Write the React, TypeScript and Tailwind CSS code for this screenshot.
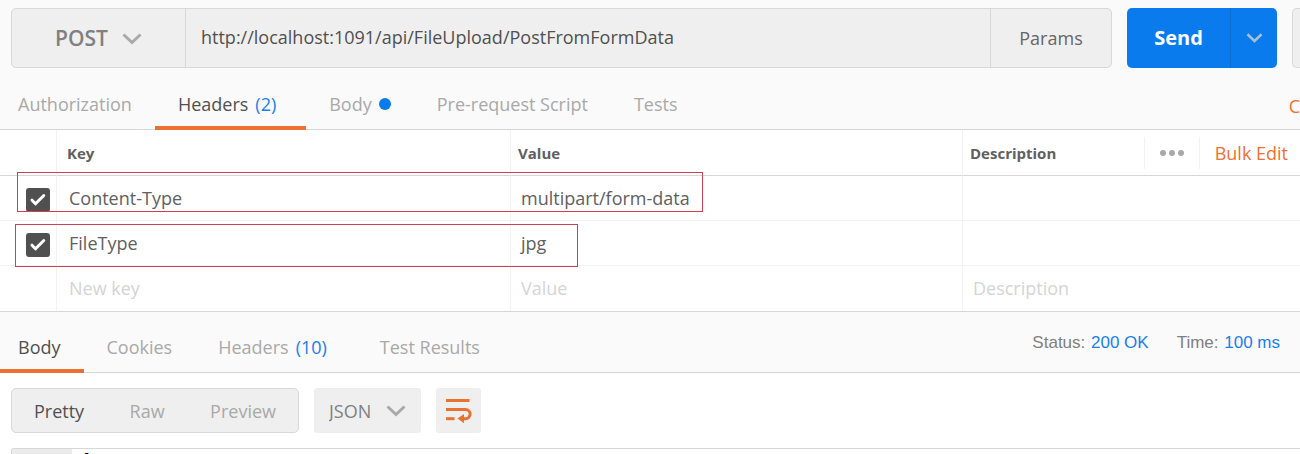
import React from "react";

type TabItem = {
  label: string;
  count?: number;
  dot?: boolean;
  active?: boolean;
};

type HeaderRow = {
  name: string;
  value: string;
};

const requestTabs: TabItem[] = [
  { label: "Authorization" },
  { label: "Headers", count: 2, active: true },
  { label: "Body", dot: true },
  { label: "Pre-request Script" },
  { label: "Tests" },
];

const responseTabs: TabItem[] = [
  { label: "Body", active: true },
  { label: "Cookies" },
  { label: "Headers", count: 10 },
  { label: "Test Results" },
];

const headerRows: HeaderRow[] = [
  { name: "Content-Type", value: "multipart/form-data" },
  { name: "FileType", value: "jpg" },
];

const Chevron = ({ className = "" }: { className?: string }) => (
  <svg viewBox="0 0 20 12" fill="none" stroke="currentColor" strokeWidth="3" className={className} aria-hidden="true">
    <path d="M1.5 1.5 10 9.5 18.5 1.5" />
  </svg>
);

const WrapIcon = () => (
  <svg viewBox="0 0 26 24" fill="none" stroke="#e8722f" strokeWidth="3" className="h-6 w-[26px]" aria-hidden="true">
    <path d="M0 1.5h23.5" />
    <path d="M0 10.5h19.5a4.6 4.6 0 0 1 0 9.2H16" />
    <path d="M0 19.7h8.5" />
    <path d="M18 15v9.2l-6.5-4.6z" fill="#e8722f" stroke="none" />
  </svg>
);

const Tabs = ({ items }: { items: TabItem[] }) => (
  <nav className="-ml-[5px] flex self-stretch">
    {items.map((item) => (
      <button
        key={item.label}
        type="button"
        className={`-mb-px flex items-center border-b-4 px-[23px] pt-[13px] ${
          item.active ? "border-[#ee7031] text-[#505050]" : "border-transparent text-[#a9a9a9]"
        }`}
      >
        {item.label}
        {item.count && <span className="mx-[7px] text-[#1a7fe8]">({item.count})</span>}
        {item.dot && <span className="ml-[7px] size-3 rounded-full bg-[#097bed]" />}
      </button>
    ))}
  </nav>
);

const RequestBar = () => (
  <div className="flex h-[68px] gap-[15px] pt-2 pl-[11px]">
    <div className="flex min-w-0 flex-1 rounded-[5px] border border-[#d8d8d8] bg-[#efefef]">
      <div className="relative flex w-[174px] shrink-0 border-r border-[#d8d8d8]">
        <select
          aria-label="Method"
          className="w-full appearance-none pl-[43px] text-[21px] font-semibold text-[#808080] outline-none"
        >
          <option>POST</option>
        </select>
        <Chevron className="pointer-events-none absolute top-6 right-[43px] h-3 w-5 text-[#a9a9a9]" />
      </div>
      <input
        aria-label="Request URL"
        defaultValue="http://localhost:1091/api/FileUpload/PostFromFormData"
        className="min-w-0 flex-1 px-[15px] pb-0.5 text-lg text-[#505050] outline-none"
      />
      <button type="button" className="w-[121px] shrink-0 border-l border-[#d8d8d8] text-lg text-[#666666]">
        Params
      </button>
    </div>
    <div className="flex w-[150px] shrink-0 overflow-hidden rounded-[5px] bg-[#097bed]">
      <button type="button" className="flex-1 text-xl font-bold text-white">
        Send
      </button>
      <button
        type="button"
        aria-label="Send options"
        className="flex w-[47px] items-center justify-center border-l border-[#0a6dd0] text-[#a9bfd2]"
      >
        <Chevron className="h-[10px] w-[17px]" />
      </button>
    </div>
    <div className="w-2 shrink-0 rounded-l-[5px] border-y border-l border-[#d8d8d8] bg-[#efefef]" />
  </div>
);

const HeadersTable = () => (
  <div className="relative">
    <table className="w-full table-fixed border-separate border-spacing-0 border-b border-[#d6d6d6] bg-white text-left text-[#606060]">
      <colgroup>
        <col className="w-[57px]" />
        <col className="w-[454px]" />
        <col className="w-[452px]" />
        <col />
      </colgroup>
      <thead className="text-[15px]">
        <tr className="h-[46px]">
          <th className="border-r border-b border-r-[#f2f2f2] border-b-[#d6d6d6]" />
          <th className="border-r border-b border-r-[#f2f2f2] border-b-[#d6d6d6] pt-0.5 pl-[10px] font-bold">Key</th>
          <th className="border-r border-b border-r-[#f2f2f2] border-b-[#d6d6d6] pt-0.5 pl-[7px] font-bold">Value</th>
          <th className="border-b border-[#d6d6d6] pl-[7px] font-bold">
            <div className="flex items-center">
              <span className="flex-1 pt-0.5">Description</span>
              <button
                type="button"
                aria-label="More"
                className="flex h-8 w-14 items-center justify-center gap-[3px] border-x border-[#f2f2f2]"
              >
                <span className="size-[6px] rounded-full bg-[#a9a9a9]" />
                <span className="size-[6px] rounded-full bg-[#a9a9a9]" />
                <span className="size-[6px] rounded-full bg-[#a9a9a9]" />
              </button>
              <button type="button" className="px-3 pl-[15px] text-lg font-normal text-[#ee7031]">
                Bulk Edit
              </button>
            </div>
          </th>
        </tr>
      </thead>
      <tbody className="text-lg">
        {headerRows.map((row) => (
          <tr key={row.name} className="h-[45px]">
            <td className="border-r border-b border-[#f2f2f2] pt-[3px] pl-[26px]">
              <label className="relative flex size-6">
                <input
                  type="checkbox"
                  defaultChecked
                  aria-label={row.name}
                  className="size-6 appearance-none rounded-[3px] bg-[#505050]"
                />
                <svg
                  viewBox="0 0 24 24"
                  fill="none"
                  stroke="white"
                  strokeWidth="3"
                  strokeLinecap="round"
                  strokeLinejoin="round"
                  className="pointer-events-none absolute inset-0 size-6"
                >
                  <path d="M6 12.2 9.5 15.8 17.8 7.5" />
                </svg>
              </label>
            </td>
            <td className="border-r border-b border-[#f2f2f2] pl-3">{row.name}</td>
            <td className="border-r border-b border-[#f2f2f2] pl-[10px]">{row.value}</td>
            <td className="border-b border-[#f2f2f2]" />
          </tr>
        ))}
        <tr className="h-[45px]">
          <td className="border-r border-[#f2f2f2]" />
          <td className="border-r border-[#f2f2f2] pb-0.5 pl-3">
            <input aria-label="New key" placeholder="New key" className="w-full outline-none placeholder:text-[#d4d4d4]" />
          </td>
          <td className="border-r border-[#f2f2f2] pb-0.5 pl-[10px]">
            <input aria-label="Value" placeholder="Value" className="w-full outline-none placeholder:text-[#d4d4d4]" />
          </td>
          <td className="pb-0.5 pl-[10px]">
            <input
              aria-label="Description"
              placeholder="Description"
              className="w-full outline-none placeholder:text-[#d4d4d4]"
            />
          </td>
        </tr>
      </tbody>
    </table>
    {/* highlight frames over the two filled rows */}
    <div className="pointer-events-none absolute top-[42px] left-[17px] h-10 w-[686px] border border-[#cc4055]" />
    <div className="pointer-events-none absolute top-[94px] left-[15px] h-[43px] w-[563px] border border-[#cc4055]" />
  </div>
);

const ResponseToolbar = () => (
  <div className="flex gap-[15px] py-[15px] pl-[11px] text-lg">
    <div className="flex h-[45px] w-72 items-center justify-between rounded-[5px] border border-[#d8d8d8] bg-[#efefef] px-[22px] text-[#a9a9a9]">
      <button type="button" className="text-[#505050]">
        Pretty
      </button>
      <button type="button">Raw</button>
      <button type="button">Preview</button>
    </div>
    <div className="relative flex h-[45px] w-[107px] rounded-[3px] bg-[#efefef]">
      <select aria-label="Format" className="w-full appearance-none pl-[15px] text-[#808080] outline-none">
        <option>JSON</option>
      </select>
      <Chevron className="pointer-events-none absolute top-[17px] right-[15px] h-3 w-5 text-[#a9a9a9]" />
    </div>
    <button
      type="button"
      aria-label="Wrap lines"
      className="flex size-[45px] items-center justify-center rounded-[3px] bg-[#efefef]"
    >
      <WrapIcon />
    </button>
  </div>
);

const App = () => {
  return (
    <main className="flex h-screen flex-col overflow-hidden bg-[#fafafa] font-['Open_Sans',sans-serif] text-lg">
      <RequestBar />

      <div className="flex h-[62px] shrink-0 items-center justify-between border-b border-[#d6d6d6]">
        <Tabs items={requestTabs} />
        <a href="#code" className="pt-[15px] text-[#ee7031]">
          C
        </a>
      </div>

      <HeadersTable />

      <div className="flex h-[61px] shrink-0 items-center justify-between border-b border-[#d6d6d6]">
        <Tabs items={responseTabs} />
        <div className="flex gap-7 pt-0.5 pr-5 font-['Liberation_Sans',sans-serif] text-[17px] text-[#808080]">
          <p>
            Status: <span className="ml-px text-[#1a7fe8]">200 OK</span>
          </p>
          <p>
            Time: <span className="ml-px text-[#1a7fe8]">100 ms</span>
          </p>
        </div>
      </div>

      <div className="flex min-h-0 flex-1 flex-col bg-white">
        <ResponseToolbar />
        <div className="ml-[11px] flex min-h-0 flex-1 overflow-hidden rounded-tl-[3px] border-t border-l border-[#d8d8d8]">
          <div className="w-[60px] bg-[#ebebeb]" />
          <code className="pl-2 font-['Liberation_Mono',monospace] text-base/6 text-black">{"{"}</code>
        </div>
      </div>
    </main>
  );
};

export default App;
